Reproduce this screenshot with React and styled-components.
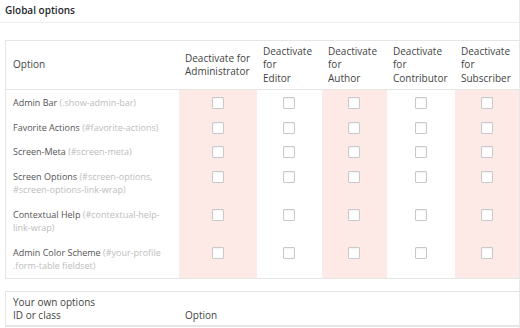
import React from "react";
import styled, { createGlobalStyle } from "styled-components";

const GlobalStyle = createGlobalStyle`
  html, body { margin: 0; padding: 0; background: #fff; }
  body { font-family: "Open Sans", "Liberation Sans", sans-serif; }
  * { box-sizing: border-box; }
`;

const Page = styled.div`
  width: 520px;
  height: 328px;
  overflow: hidden;
  border-right: 1px solid #e8e8e8;
  background: #fff;
`;

const Title = styled.h3`
  margin: 0;
  height: 23px;
  padding: 4px 5px 0;
  font-size: 10px;
  line-height: 13px;
  font-weight: 600;
  color: #23282d;
  border-bottom: 1px solid #eeeeee;
`;

const Body = styled.div`
  padding: 17px 0 0 5px;
  display: flex;
  flex-direction: column;
  gap: 12px;
`;

const Grid = styled.div`
  display: grid;
  grid-template-columns: 173px 78px 65px 65px 68px 1fr;
  border: 1px solid #e5e5e5;
  border-right: none;
  background: #fff;
`;

const HeadCell = styled.div`
  display: flex;
  align-items: ${(p) => (p.$bottom ? "flex-end" : "center")};
  min-height: ${(p) => (p.$short ? "33px" : "49px")};
  padding: ${(p) => (p.$short ? "4px" : "0")} ${(p) => (p.$first ? "14px" : "6px")} ${(p) => (p.$short ? "2px" : "0")} ${(p) => (p.$first ? "7px" : "6px")};
  font-size: 10px;
  line-height: 13.5px;
  color: #444;
  border-bottom: 1px solid #e5e5e5;
`;

const LabelCell = styled.div`
  padding: 6px 14px 5px 7px;
  font-size: 9px;
  line-height: 13.5px;
  color: #555;
`;

const Code = styled.span`
  color: #bdbdbd;
`;

const BoxCell = styled.div`
  display: flex;
  justify-content: center;
  align-items: flex-start;
  padding: 7px 1px 5px 0;
  background: ${(p) => (p.$pink ? "#fdeae7" : "#fff")};
`;

const Check = styled.span`
  display: block;
  width: 12px;
  height: 12px;
  border: 1px solid #c9c9c9;
  border-radius: 1px;
  background: #fff;
  box-shadow: inset 0 1px 2px rgba(0, 0, 0, 0.06);
`;

const roles = ["Administrator", "Editor", "Author", "Contributor", "Subscriber"];

const options = [
  ["Admin Bar", "(.show-admin-bar)"],
  ["Favorite Actions", "(#favorite-actions)"],
  ["Screen-Meta", "(#screen-meta)"],
  ["Screen Options", "(#screen-options, #screen-options-link-wrap)"],
  ["Contextual Help", "(#contextual-help-link-wrap)"],
  ["Admin Color Scheme", "(#your-profile .form-table fieldset)"],
];

export default function App() {
  return (
    <Page>
      <GlobalStyle />
      <Title>Global options</Title>
      <Body>
        <Grid>
          <HeadCell $first>Option</HeadCell>
          <HeadCell>Deactivate for Administrator</HeadCell>
          {roles.slice(1).map((r) => (
            <HeadCell key={r}>
              Deactivate
              <br />
              for
              <br />
              {r}
            </HeadCell>
          ))}
          {options.map(([name, code]) => (
            <React.Fragment key={name}>
              <LabelCell>
                {name} <Code>{code}</Code>
              </LabelCell>
              {roles.map((r, i) => (
                <BoxCell key={r} $pink={i % 2 === 0}>
                  <Check />
                </BoxCell>
              ))}
            </React.Fragment>
          ))}
        </Grid>
        <Grid>
          <HeadCell $first $short $bottom>
            Your own options
            <br />
            ID or class
          </HeadCell>
          <HeadCell $short $bottom style={{ gridColumn: "2 / -1" }}>Option</HeadCell>
        </Grid>
      </Body>
    </Page>
  );
}
